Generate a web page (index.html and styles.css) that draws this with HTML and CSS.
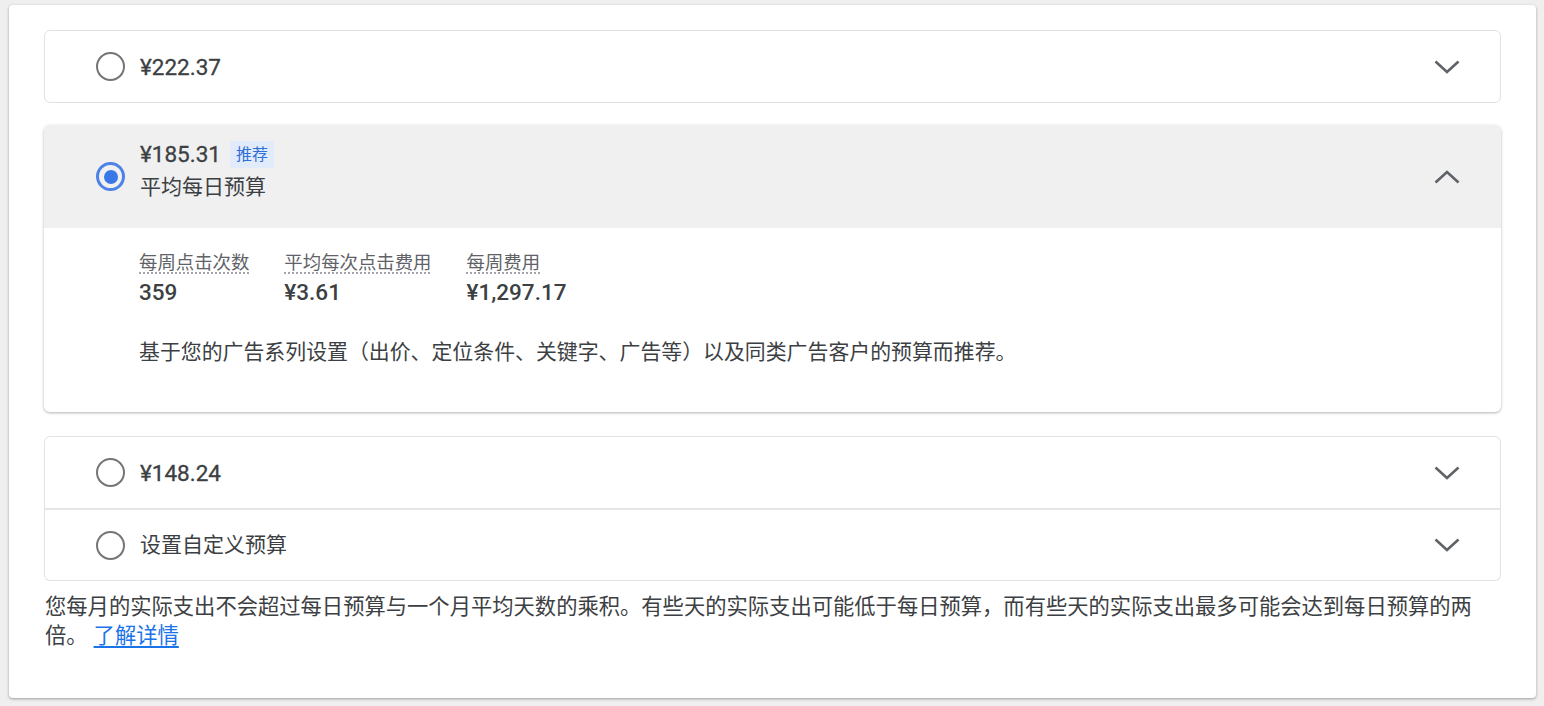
FILE: index.html
```html
<!DOCTYPE html>
<html lang="zh-CN">
<head>
<meta charset="utf-8">
<title>预算</title>
<link rel="stylesheet" href="styles.css">
</head>
<body>
<div class="card">
  <div class="panel">
    <div class="panel-head">
      <span class="radio"></span>
      <div class="head-text"><span class="price">¥222.37</span></div>
      <svg class="chev" width="26" height="14" viewBox="0 0 26 14"><polyline points="1.5,1.5 13,12 24.5,1.5" fill="none" stroke="#5f6368" stroke-width="2.6"/></svg>
    </div>
  </div>

  <div class="panel expanded">
    <div class="panel-head tall">
      <span class="radio checked"></span>
      <div class="head-text top">
        <div class="price-row"><span class="price">¥185.31</span><span class="badge">推荐</span></div>
        <div class="subtitle">平均每日预算</div>
      </div>
      <svg class="chev" width="26" height="14" viewBox="0 0 26 14"><polyline points="1.5,12.5 13,2 24.5,12.5" fill="none" stroke="#5f6368" stroke-width="2.6"/></svg>
    </div>
    <div class="panel-body">
      <div class="stats">
        <div class="stat"><div class="label">每周点击次数</div><div class="value">359</div></div>
        <div class="stat"><div class="label">平均每次点击费用</div><div class="value">¥3.61</div></div>
        <div class="stat"><div class="label">每周费用</div><div class="value">¥1,297.17</div></div>
      </div>
      <p class="desc">基于您的广告系列设置（出价、定位条件、关键字、广告等）以及同类广告客户的预算而推荐。</p>
    </div>
  </div>

  <div class="panel joined-top">
    <div class="panel-head">
      <span class="radio"></span>
      <div class="head-text"><span class="price">¥148.24</span></div>
      <svg class="chev" width="26" height="14" viewBox="0 0 26 14"><polyline points="1.5,1.5 13,12 24.5,1.5" fill="none" stroke="#5f6368" stroke-width="2.6"/></svg>
    </div>
  </div>
  <div class="panel joined-bottom">
    <div class="panel-head short">
      <span class="radio"></span>
      <div class="head-text"><span class="custom">设置自定义预算</span></div>
      <svg class="chev" width="26" height="14" viewBox="0 0 26 14"><polyline points="1.5,1.5 13,12 24.5,1.5" fill="none" stroke="#5f6368" stroke-width="2.6"/></svg>
    </div>
  </div>

  <p class="footer">您每月的实际支出不会超过每日预算与一个月平均天数的乘积。有些天的实际支出可能低于每日预算，而有些天的实际支出最多可能会达到每日预算的两倍。<a href="#" class="link">了解详情</a></p>
</div>
</body>
</html>
```

FILE: styles.css
```css
html, body {
  margin: 0;
  padding: 0;
}
body {
  background: #efefef;
  font-family: Roboto, "Noto Sans CJK SC", sans-serif;
  color: #3c4043;
  width: 1544px;
  height: 706px;
  overflow: hidden;
}
.card {
  margin: 5px 0 0 9px;
  width: 1527px;
  height: 693px;
  box-sizing: border-box;
  background: #fff;
  border-radius: 4px;
  box-shadow: 0 1px 3px rgba(0,0,0,0.35);
  padding: 25px 35px 0 35px;
}
.panel {
  border: 1px solid #e2e2e2;
  border-radius: 6px;
  background: #fff;
}
.panel + .panel { margin-top: 22px; }
.panel.expanded {
  border: none;
  box-shadow: 0 1px 3px rgba(0,0,0,0.3);
  overflow: hidden;
  margin-bottom: 24px;
}
.panel.expanded + .panel { margin-top: 0; }
.panel.joined-top { border-radius: 6px 6px 0 0; }
.panel.joined-bottom { margin-top: 0; border-top: 1px solid #e8e8e8; border-radius: 0 0 6px 6px; }
.panel-head {
  display: flex;
  align-items: center;
  height: 71px;
  padding: 0 40px 0 51px;
}
.panel-head.short { height: 70px; }
.panel-head.tall {
  height: 103px;
  background: #f0f0f1;
  padding-left: 52px;
  padding-right: 41px;
}
.radio {
  width: 29px;
  height: 29px;
  box-sizing: border-box;
  border: 2.5px solid #757575;
  border-radius: 50%;
  flex: none;
  position: relative;
}
.radio.checked {
  border-color: #4d82e6;
  border-width: 3px;
}
.radio.checked::after {
  content: "";
  position: absolute;
  left: 4.5px;
  top: 4.5px;
  width: 14px;
  height: 14px;
  border-radius: 50%;
  background: #3b78e7;
}
.head-text {
  flex: 1;
  margin-left: 15px;
}
.head-text.top {
  align-self: flex-start;
  margin-top: 13px;
}
.price {
  font-size: 22.5px;
  line-height: 32px;
  color: #3c4043;
  font-weight: 400;
  -webkit-text-stroke: 0.3px #3c4043;
}
.price-row {
  display: flex;
  align-items: center;
  height: 32px;
}
.badge {
  margin-left: 9px;
  font-size: 16px;
  line-height: 27px;
  padding: 0 6px;
  background: #e2ebfb;
  color: #2f6fd6;
  border-radius: 2px;
}
.subtitle {
  font-size: 21px;
  line-height: 34px;
  color: #3c4043;
}
.custom {
  font-size: 21px;
  line-height: 30px;
  color: #3c4043;
}
.chev { flex: none; }
.panel-body {
  padding: 22px 40px 46px 95px;
}
.stats {
  display: flex;
  gap: 35px;
}
.label {
  font-size: 18.4px;
  line-height: 26px;
  color: #5f6368;
  text-decoration: underline dotted #9aa0a6;
  text-underline-offset: 4px;
}
.value {
  font-size: 22.5px;
  line-height: 32px;
  font-weight: 500;
  color: #3c4043;
}
.desc {
  margin: 30px 0 0 0;
  font-size: 20.9px;
  line-height: 28px;
  color: #3c4043;
}
.footer {
  margin: 11px 0 0 1px;
  width: 1440px;
  font-size: 21.3px;
  line-height: 29px;
  color: #3c4043;
}
.link {
  display: inline-block;
  margin-left: 6px;
  color: #1a73e8;
  text-decoration: underline;
  text-underline-offset: 3px;
}
```
